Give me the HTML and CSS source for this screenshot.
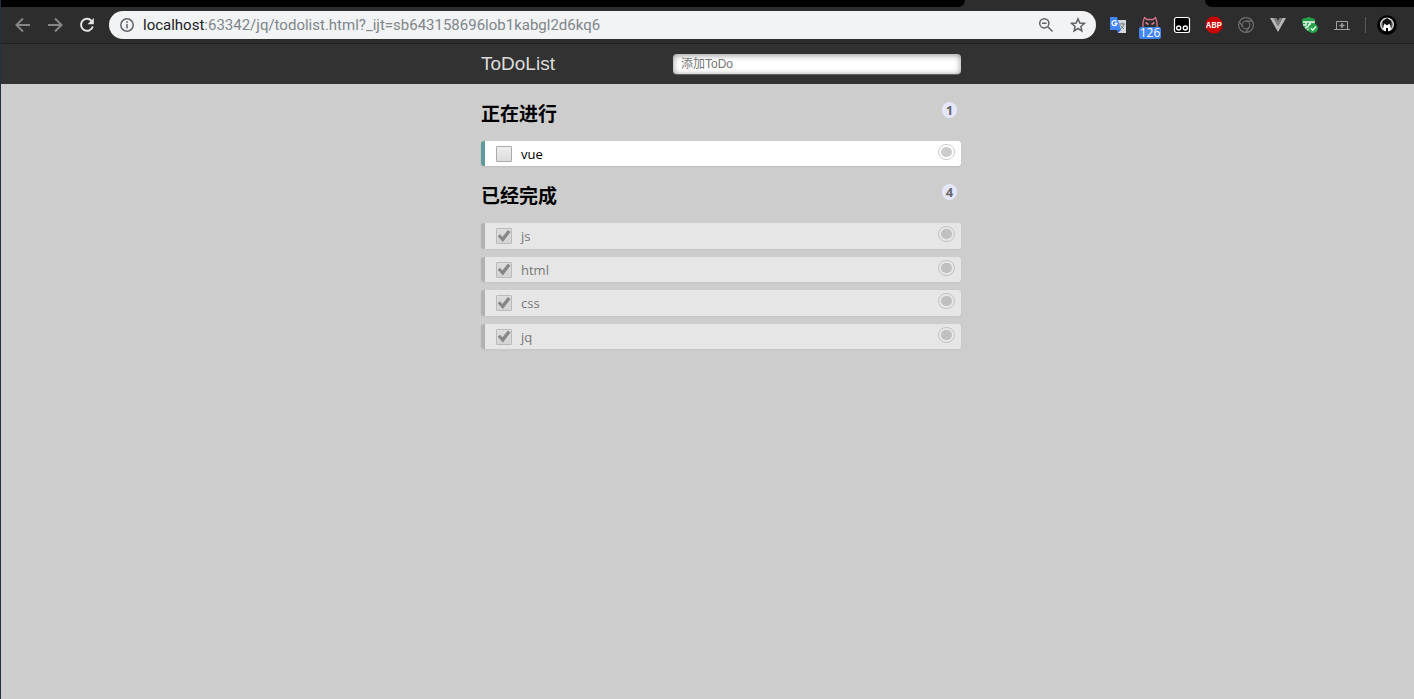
FILE: index.html
```html
<!DOCTYPE html>
<html lang="zh-CN">
<head>
<meta charset="utf-8">
<title>ToDoList</title>
<link rel="stylesheet" href="styles.css">
</head>
<body>
<div class="window">
  <div class="tabstrip">
    <div class="tabs-left"></div>
    <div class="tab-active"></div>
    <div class="tabs-right"></div>
  </div>
  <div class="toolbar">
    <button class="nav dim" aria-label="Back"><svg width="16" height="16" viewBox="0 0 16 16"><path d="M15 8H2M8 1.500L1.500 8L8 14.500"/></svg></button>
    <button class="nav dim" aria-label="Forward"><svg width="16" height="16" viewBox="0 0 16 16"><path d="M1 8H14M8 1.500L14.500 8L8 14.500"/></svg></button>
    <button class="nav" aria-label="Reload"><svg width="16" height="16" viewBox="0 0 16 16"><path d="M13.800 9.500A6 6 0 1 1 12.500 3.800"/><path class="solid" d="M14.800 1V7.300H8.500Z"/></svg></button>
    <div class="address">
      <svg class="glyph" width="16" height="16" viewBox="0 0 16 16"><circle cx="8" cy="8" r="6.200"/><path d="M8 7V11.500M8 4.200V6"/></svg>
      <div class="url"><span class="host">localhost</span>:63342/jq/todolist.html?_ijt=sb643158696lob1kabgl2d6kq6</div>
      <button class="inner" aria-label="Zoom"><svg class="glyph" width="16" height="16" viewBox="0 0 16 16"><circle cx="6.300" cy="6.300" r="4.600"/><path d="M9.800 9.800L14.500 14.500M4 6.300H8.600"/></svg></button>
      <button class="inner" aria-label="Bookmark"><svg class="glyph" width="16" height="16" viewBox="0 0 16 16"><path d="M8 1.800L9.800 6L14.300 6.400L10.900 9.400L11.900 13.900L8 11.500L4.100 13.900L5.100 9.400L1.700 6.400L6.200 6Z"/></svg></button>
    </div>
    <div class="extensions">
      <button class="ext" aria-label="Translate"><svg width="18" height="18" viewBox="0 0 18 18"><path fill="#d5d7da" d="M7 4H17V17H9Z"/><path fill="none" stroke="#6f8087" d="M10 8H16M13 6.500V8M15 8Q14 12 10.500 13.500M11.500 9.500L15 13"/><path fill="#4285f4" d="M1 1H8L12 14H1Z"/><path fill="#3367d6" d="M8 14H12L9 17Z"/><path fill="none" stroke="#fff" stroke-width="1.300" d="M7.400 5.500A2.500 2.500 0 1 0 8 7.500H5.600"/></svg></button>
      <button class="ext" aria-label="126"><svg width="18" height="18" viewBox="0 0 18 18"><path fill="none" stroke="#d8768d" stroke-width="1.300" d="M2 12V6L3.500 1.500L6 3.500H12L14.500 1.500L16 6V12"/><path fill="none" stroke="#d8768d" stroke-width="1.600" d="M4.500 6.500L7.500 8.500M13.500 6.500L10.500 8.500"/></svg><span class="count">126</span></button>
      <button class="ext" aria-label="Tampermonkey"><svg width="18" height="18" viewBox="0 0 18 18"><rect x="1.500" y="1.500" width="15" height="15" rx="2" fill="#000" stroke="#fff" stroke-width="1.200"/><g fill="none" stroke="#fff" stroke-width="1.400"><circle cx="5.700" cy="12" r="2"/><circle cx="12.300" cy="12" r="2"/></g></svg></button>
      <button class="ext abp" aria-label="Adblock Plus"><span>ABP</span></button>
      <button class="ext" aria-label="Devtools"><svg width="18" height="18" viewBox="0 0 18 18" fill="none" stroke="#707070" stroke-width="1.200"><circle cx="9" cy="9" r="7.400"/><circle cx="9" cy="9" r="3.800"/><path d="M9 5.200H15M5.700 11L3 6.500M12.300 11L9 16.400"/></svg></button>
      <button class="ext" aria-label="Vue"><svg width="18" height="18" viewBox="0 0 18 18"><path fill="#b8b8b8" d="M1 2H4.500L9 10L13.500 2H17L9 16Z"/><path fill="#808080" d="M4.500 2H7.500L9 5L10.500 2H13.500L9 10Z"/></svg></button>
      <button class="ext" aria-label="Proxy"><svg width="18" height="18" viewBox="0 0 18 18"><path fill="#259b48" d="M1 3L8 1L14 3V11L11 17Q4 15 1 7Z"/><path fill="none" stroke="#e9f6ed" stroke-width="1.500" d="M2 6H14M5 6V9H2M9 6V10M7 8.500H13M4 12L8 10M6 14L9 12"/><circle cx="12.300" cy="12.300" r="4.700" fill="#28a34b"/><path fill="none" stroke="#d9f3e0" stroke-width="1.500" d="M9.800 12.300L11.700 14.100L15 10.500"/></svg></button>
      <button class="ext" aria-label="Laptop"><svg width="18" height="18" viewBox="0 0 18 18" fill="none" stroke="#a0a0a0"><path d="M3.500 13V5.500H14.500V13M1 13.500H17"/><path stroke-width="1.500" d="M9 7V12M6.500 9.500H11.500"/></svg></button>
      <span class="divider"></span>
      <button class="avatar" aria-label="Profile"><svg width="20" height="20" viewBox="0 0 20 20"><circle cx="10" cy="10" r="9.800" fill="#000"/><circle cx="10" cy="9.500" r="6.300" fill="#555" stroke="#d6d6d6" stroke-width="1.400"/><path fill="#111" d="M6 6L10 3L14 6V10H6Z"/><path fill="#fff" d="M6 14L7.500 8.500L10 10.500L12.500 8.500L14 14L12 16H8Z"/><path fill="#000" d="M9 13H11V18H9Z"/></svg></button>
    </div>
  </div>
  <header class="header">
    <form class="column bar">
      <label class="title" for="new-todo">ToDoList</label>
      <input class="new-todo" id="new-todo" type="text" placeholder="添加ToDo" autocomplete="off">
    </form>
  </header>
  <main class="main">
    <div class="column">
      <section>
        <h2 class="heading">正在进行<span class="badge">1</span></h2>
        <ol class="list">
          <li class="item"><label class="task"><input class="check" type="checkbox"><span>vue</span></label><button class="remove" aria-label="删除 vue"></button></li>
        </ol>
      </section>
      <section>
        <h2 class="heading">已经完成<span class="badge">4</span></h2>
        <ul class="list">
          <li class="item done"><label class="task"><input class="check" type="checkbox" checked><span>js</span></label><button class="remove" aria-label="删除 js"></button></li>
          <li class="item done"><label class="task"><input class="check" type="checkbox" checked><span>html</span></label><button class="remove" aria-label="删除 html"></button></li>
          <li class="item done"><label class="task"><input class="check" type="checkbox" checked><span>css</span></label><button class="remove" aria-label="删除 css"></button></li>
          <li class="item done"><label class="task"><input class="check" type="checkbox" checked><span>jq</span></label><button class="remove" aria-label="删除 jq"></button></li>
        </ul>
      </section>
    </div>
  </main>
</div>
</body>
</html>
```
FILE: styles.css
```css
* { box-sizing: border-box; }
body { margin: 0; background: #cdcdcd; font-family: "Liberation Sans", "Noto Sans CJK SC", sans-serif; }
button { margin: 0; padding: 0; border: 0; background: none; font: inherit; }
svg { display: block; }

.window { min-height: 100vh; border-left: 1px solid #263037; }

.tabstrip { display: flex; height: 7px; background: #2d2d2d; }
.tabs-left { flex: 964; background: #000; border-bottom-right-radius: 7px; }
.tab-active { flex: 240; }
.tabs-right { flex: 209; background: #000; border-bottom-left-radius: 7px; }

.toolbar { display: flex; align-items: center; height: 37px; padding: 0 17px 0 6px; background: #2d2d2d; border-bottom: 1px solid #1f1f1f; }
.nav { display: flex; justify-content: center; width: 32px; fill: none; stroke: #e6e6e6; stroke-width: 2; }
.dim { stroke: #858585; }
.solid { fill: #e6e6e6; stroke: none; }
.address { display: flex; flex: 1; align-items: center; gap: 16px; height: 28px; margin-left: 6px; padding: 0 10px; border-radius: 14px; background: #f1f3f4; }
.glyph { flex: none; fill: none; stroke: #5f6368; stroke-width: 1.5; }
.url { flex: 1; margin-left: -8px; font: 15px/20px Roboto, sans-serif; color: #80868b; white-space: nowrap; }
.host { color: #202124; }
.extensions { display: flex; align-items: center; gap: 14px; margin-left: 13px; }
.ext { position: relative; display: flex; align-items: center; justify-content: center; width: 18px; height: 18px; }
.count { position: absolute; left: -2px; top: 11px; width: 22px; height: 12px; border-radius: 2px; background: #4285f4; color: #fff; font: 12px/12px "Open Sans", sans-serif; text-align: center; }
.abp { background: #c00; color: #fff; font: bold 8px/18px "Noto Sans CJK SC", sans-serif; clip-path: polygon(30% 4%, 70% 4%, 96% 30%, 96% 70%, 70% 96%, 30% 96%, 4% 70%, 4% 30%); }
.divider { width: 1px; height: 16px; background: #5a5a5a; }
.avatar { width: 20px; height: 20px; margin-left: -3px; }

.header { padding-left: 27px; background: #323232; }
.main { padding-left: 27px; }
.column { width: 480px; max-width: 100%; margin: 0 auto; }
.bar { display: flex; align-items: center; justify-content: space-between; height: 40px; }
.title { font-size: 19px; line-height: 40px; color: #ddd; }
.new-todo { width: 60%; height: 20px; padding: 0 8px; border: 0; border-radius: 4px; outline: 0; background: #fff; box-shadow: 0 1px 0 rgba(255, 255, 255, .24), 0 1px 6px rgba(0, 0, 0, .45) inset; font: 12px/20px "Liberation Sans", "Noto Sans CJK SC", sans-serif; }
.new-todo::placeholder { color: #757575; opacity: 1; }

.heading { display: flex; justify-content: space-between; margin: 0; padding-top: 16px; font: bold 19px/26px "Noto Sans CJK SC", sans-serif; color: #000; }
.badge { width: 15px; height: 16px; margin: 2px 4px 0 0; border-radius: 8px; background: #e6e6fa; color: #666; font: bold 13px/17px "Open Sans", sans-serif; text-align: center; }
.list { display: grid; gap: 8px; margin: 0; padding: 15px 0 0; list-style: none; }
.item { display: flex; justify-content: space-between; height: 25px; border-left: 4px solid #629a9c; border-radius: 3px; background: #fff; box-shadow: 0 1px 2px rgba(0, 0, 0, .07); }
.done { border-color: #999; opacity: .5; }
.done:nth-child(odd) { height: 26px; }
.task { display: flex; align-items: center; gap: 9px; padding-left: 11px; font: 13px/20px "Open Sans", sans-serif; color: #000; }
.done .task { color: #222; }
.check { appearance: none; width: 16px; height: 16px; margin: 0; border: 1px solid #aaa; border-radius: 1px; background: linear-gradient(#eee, #dcdcdc); }
.check:checked::after { content: ""; display: block; width: 14px; height: 14px; background: #444; clip-path: polygon(5% 52%, 22% 38%, 38% 58%, 78% 8%, 97% 22%, 42% 92%); }
.remove { width: 17px; height: 16px; margin: 3px 6px 0 0; padding: 2px; border: 1px solid #ccc; border-radius: 8px; }
.done .remove { border-color: #bbb; }
.remove::before { content: ""; display: block; width: 11px; height: 10px; border-radius: 5px; background: #ccc; }
.done .remove::before { background: #b4b4b4; }
```
